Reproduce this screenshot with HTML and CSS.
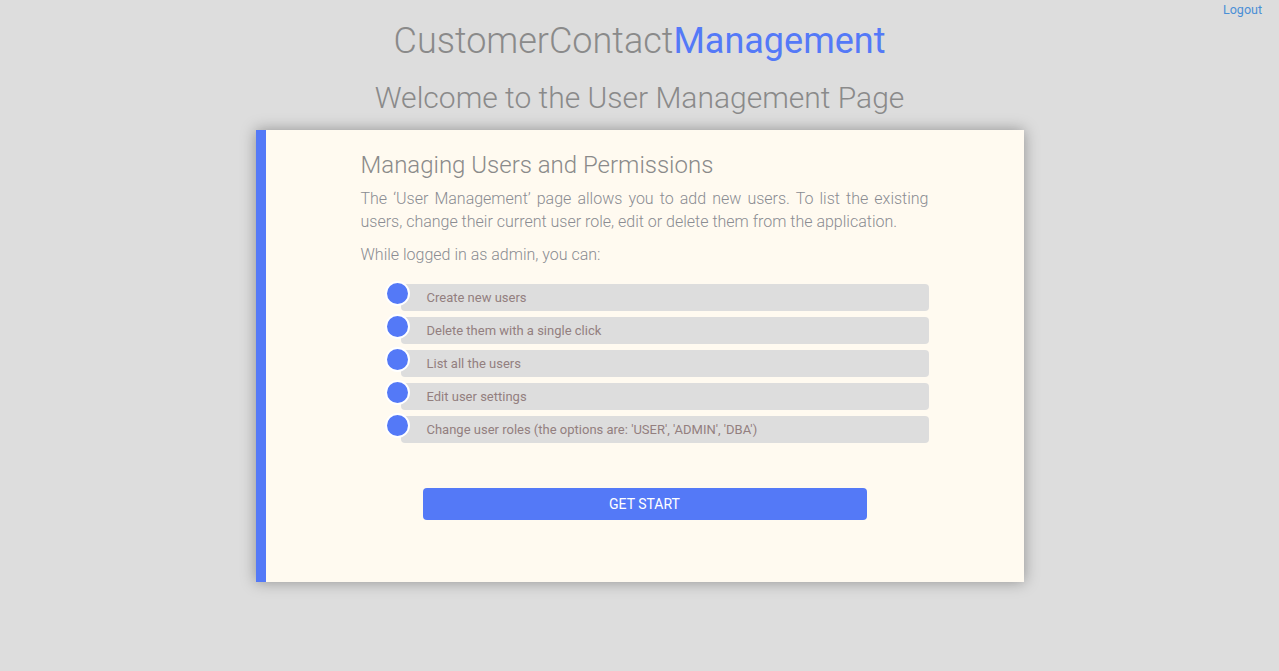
FILE: index.html
```html
<!DOCTYPE html>
<html>
<head>
<meta charset="utf-8">
<title>User Management</title>
<link rel="stylesheet" href="styles.css">
</head>
<body>
<div class="topbar"><a class="logout" href="#">Logout</a></div>
<h1 class="brand">CustomerContact<span class="brand-accent">Management</span></h1>
<h2 class="welcome">Welcome to the User Management Page</h2>
<div class="card">
  <div class="card-inner">
    <h3 class="card-title">Managing Users and Permissions</h3>
    <p class="intro">The ‘User Management’ page allows you to add new users. To list the existing users, change their current user role, edit or delete them from the application.</p>
    <p class="lead">While logged in as admin, you can:</p>
    <ul class="features">
      <li class="feature"><span class="dot"></span><span class="feature-text">Create new users</span></li>
      <li class="feature"><span class="dot"></span><span class="feature-text">Delete them with a single click</span></li>
      <li class="feature"><span class="dot"></span><span class="feature-text">List all the users</span></li>
      <li class="feature"><span class="dot"></span><span class="feature-text">Edit user settings</span></li>
      <li class="feature"><span class="dot"></span><span class="feature-text">Change user roles (the options are: 'USER', 'ADMIN', 'DBA')</span></li>
    </ul>
    <div class="actions"><button class="start-btn">GET START</button></div>
  </div>
</div>
</body>
</html>
```
FILE: styles.css
```css
html, body {
  margin: 0;
  padding: 0;
}
body {
  background: #dddddd;
  font-family: Roboto, "Liberation Sans", sans-serif;
  color: #8a8a8a;
  min-height: 671px;
}
.topbar {
  display: flex;
  justify-content: flex-end;
  padding: 1px 17px 0 0;
  height: 18px;
}
.logout {
  color: #4a8fd6;
  font-size: 12.5px;
  text-decoration: none;
  line-height: 18px;
}
.brand {
  margin: 0;
  text-align: center;
  font-weight: 300;
  font-size: 36px;
  line-height: 44px;
  color: #8a8a8a;
}
.brand-accent {
  color: #5479f7;
  font-weight: 400;
}
.welcome {
  margin: 11px 0 0;
  text-align: center;
  font-weight: 300;
  font-size: 30px;
  line-height: 48px;
  color: #8a8a8a;
}
.card {
  width: 768px;
  height: 452px;
  box-sizing: border-box;
  margin: 8px auto 0;
  border-left: 10px solid #5479f7;
  background: #fffaf0;
  box-shadow: 0 0 14px rgba(0, 0, 0, 0.35);
}
.card-inner {
  width: 568px;
  margin: 0 auto;
  padding-top: 20px;
}
.card-title {
  margin: 0;
  font-size: 24px;
  font-weight: 300;
  line-height: 30px;
  color: #8a8a8a;
}
.intro {
  margin: 7px 0 0;
  font-size: 16px;
  font-weight: 300;
  line-height: 23px;
  text-align: justify;
  color: #8a8c92;
}
.lead {
  margin: 10px 0 0;
  font-size: 16px;
  font-weight: 300;
  line-height: 23px;
  color: #8a8c92;
}
.features {
  list-style: none;
  margin: 18px 0 0;
  padding: 0;
  display: flex;
  flex-direction: column;
  gap: 6px;
}
.feature {
  position: relative;
  margin-left: 40px;
  height: 27px;
  background: #dddddd;
  border-radius: 4px;
  display: flex;
  align-items: center;
}
.dot {
  position: absolute;
  left: -16px;
  top: -3px;
  width: 21px;
  height: 21px;
  border-radius: 50%;
  background: #5479f7;
  border: 2px solid #ffffff;
}
.feature-text {
  padding-left: 26px;
  font-size: 13px;
  color: #937f7f;
  line-height: 27px;
}
.actions {
  margin-top: 45px;
  display: flex;
  justify-content: center;
}
.start-btn {
  width: 444px;
  height: 32px;
  background: #5479f7;
  border: none;
  border-radius: 4px;
  color: #ffffff;
  font-family: Roboto, "Liberation Sans", sans-serif;
  font-size: 14px;
  font-weight: 400;
  text-transform: uppercase;
  cursor: pointer;
}
```
